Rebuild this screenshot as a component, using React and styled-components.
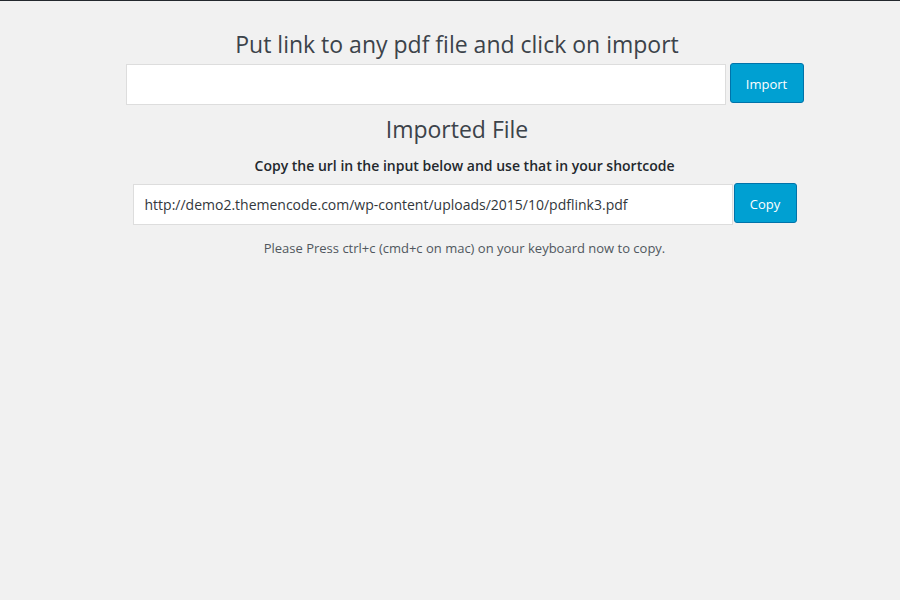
import React from "react";
import styled, { createGlobalStyle } from "styled-components";

const Global = createGlobalStyle`
  html, body { margin: 0; padding: 0; background: #f1f1f1; }
  body {
    font-family: "Open Sans", "Noto Sans", sans-serif;
    border-top: 1px solid #23282d;
    min-height: 599px;
  }
`;

const Page = styled.div`
  padding: 28px 0 0 29px;
  display: flex;
  flex-direction: column;
  align-items: center;
`;

const Heading = styled.h2`
  margin: ${(p) => p.$mt || 0}px 0 0;
  padding-right: 15px;
  font-size: 23px;
  font-weight: 400;
  line-height: 30px;
  color: #3c434a;
`;

const Row = styled.div`
  display: flex;
  align-items: flex-start;
  gap: ${(p) => p.$gap}px;
  margin-top: ${(p) => p.$mt}px;
`;

const Input = styled.input`
  box-sizing: border-box;
  width: ${(p) => p.$w}px;
  height: 41px;
  margin-top: 1px;
  border: 1px solid #ddd;
  background: #fff;
  padding: 0 11px;
  font-family: "Open Sans", sans-serif;
  font-size: 14px;
  color: #32373c;
  outline: none;
`;

const Button = styled.button`
  box-sizing: border-box;
  width: ${(p) => p.$w}px;
  height: 40px;
  background: #00a0d2;
  border: 1px solid #0073aa;
  border-radius: 3px;
  color: #fff;
  font-family: "Open Sans", sans-serif;
  font-size: 13px;
  padding: 2px 0 0;
  cursor: pointer;
`;

const Instruction = styled.p`
  margin: 12px 0 0;
  font-size: 14px;
  font-weight: 600;
  line-height: 20px;
  color: #23282d;
`;

const Note = styled.p`
  margin: 13px 0 0;
  font-size: 13px;
  line-height: 20px;
  color: #50575e;
`;

export default function App() {
  return (
    <>
      <Global />
      <Page>
        <Heading>Put link to any pdf file and click on import</Heading>
        <Row $mt={4} $gap={4}>
          <Input $w={600} type="text" />
          <Button $w={74}>Import</Button>
        </Row>
        <Heading $mt={9}>Imported File</Heading>
        <Instruction>Copy the url in the input below and use that in your shortcode</Instruction>
        <Row $mt={7} $gap={1}>
          <Input
            $w={600}
            type="text"
            readOnly
            value="http://demo2.themencode.com/wp-content/uploads/2015/10/pdflink3.pdf"
          />
          <Button $w={63}>Copy</Button>
        </Row>
        <Note>Please Press ctrl+c (cmd+c on mac) on your keyboard now to copy.</Note>
      </Page>
    </>
  );
}
